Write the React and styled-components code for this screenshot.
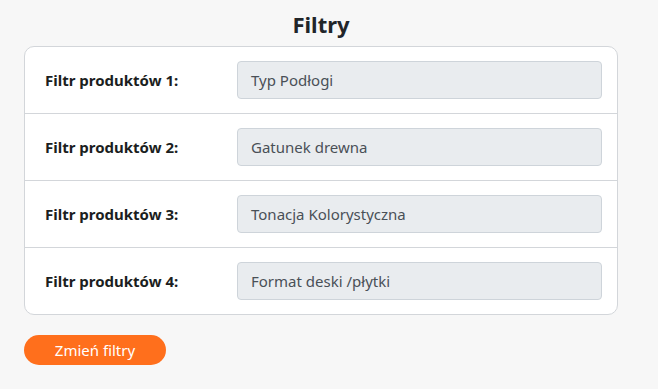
import React from "react";
import styled, { createGlobalStyle } from "styled-components";

const Global = createGlobalStyle`
  html, body { margin: 0; padding: 0; background: #f7f7f7; }
  body { font-family: "Segoe UI", "Noto Sans", "Open Sans", sans-serif; color: #212529; }
`;

const Page = styled.div`
  width: 594px;
  margin-left: 24px;
  padding-top: 8px;
`;

const Title = styled.h2`
  margin: 0 0 6px;
  text-align: center;
  font-size: 22px;
  font-weight: 700;
  line-height: 32px;
  color: #212529;
`;

const Card = styled.div`
  background: #fff;
  border: 1px solid #d3d6da;
  border-radius: 10px;
  overflow: hidden;
`;

const Row = styled.div`
  display: flex;
  align-items: center;
  padding: 14px 15px 14px 20px;
  & + & { border-top: 1px solid #d3d6da; }
`;

const Label = styled.label`
  width: 192px;
  flex: none;
  font-size: 15px;
  font-weight: 700;
  color: #1b1e21;
`;

const Input = styled.div`
  flex: 1;
  height: 38px;
  box-sizing: border-box;
  padding: 0 13px;
  display: flex;
  align-items: center;
  background: #e9ecef;
  border: 1px solid #ced4da;
  border-radius: 4px;
  font-size: 15px;
  color: #495057;
`;

const Button = styled.button`
  margin-top: 20px;
  width: 142px;
  height: 30px;
  border: none;
  border-radius: 15px;
  background: #ff6f1c;
  color: #fff;
  font-family: inherit;
  font-size: 15px;
  cursor: pointer;
  padding: 0;
`;

const filters = ["Typ Podłogi", "Gatunek drewna", "Tonacja Kolorystyczna", "Format deski /płytki"];

export default function App() {
  return (
    <>
      <Global />
      <Page>
        <Title>Filtry</Title>
        <Card>
          {filters.map((f, i) => (
            <Row key={i}>
              <Label>Filtr produktów {i + 1}:</Label>
              <Input>{f}</Input>
            </Row>
          ))}
        </Card>
        <Button>Zmień filtry</Button>
      </Page>
    </>
  );
}
